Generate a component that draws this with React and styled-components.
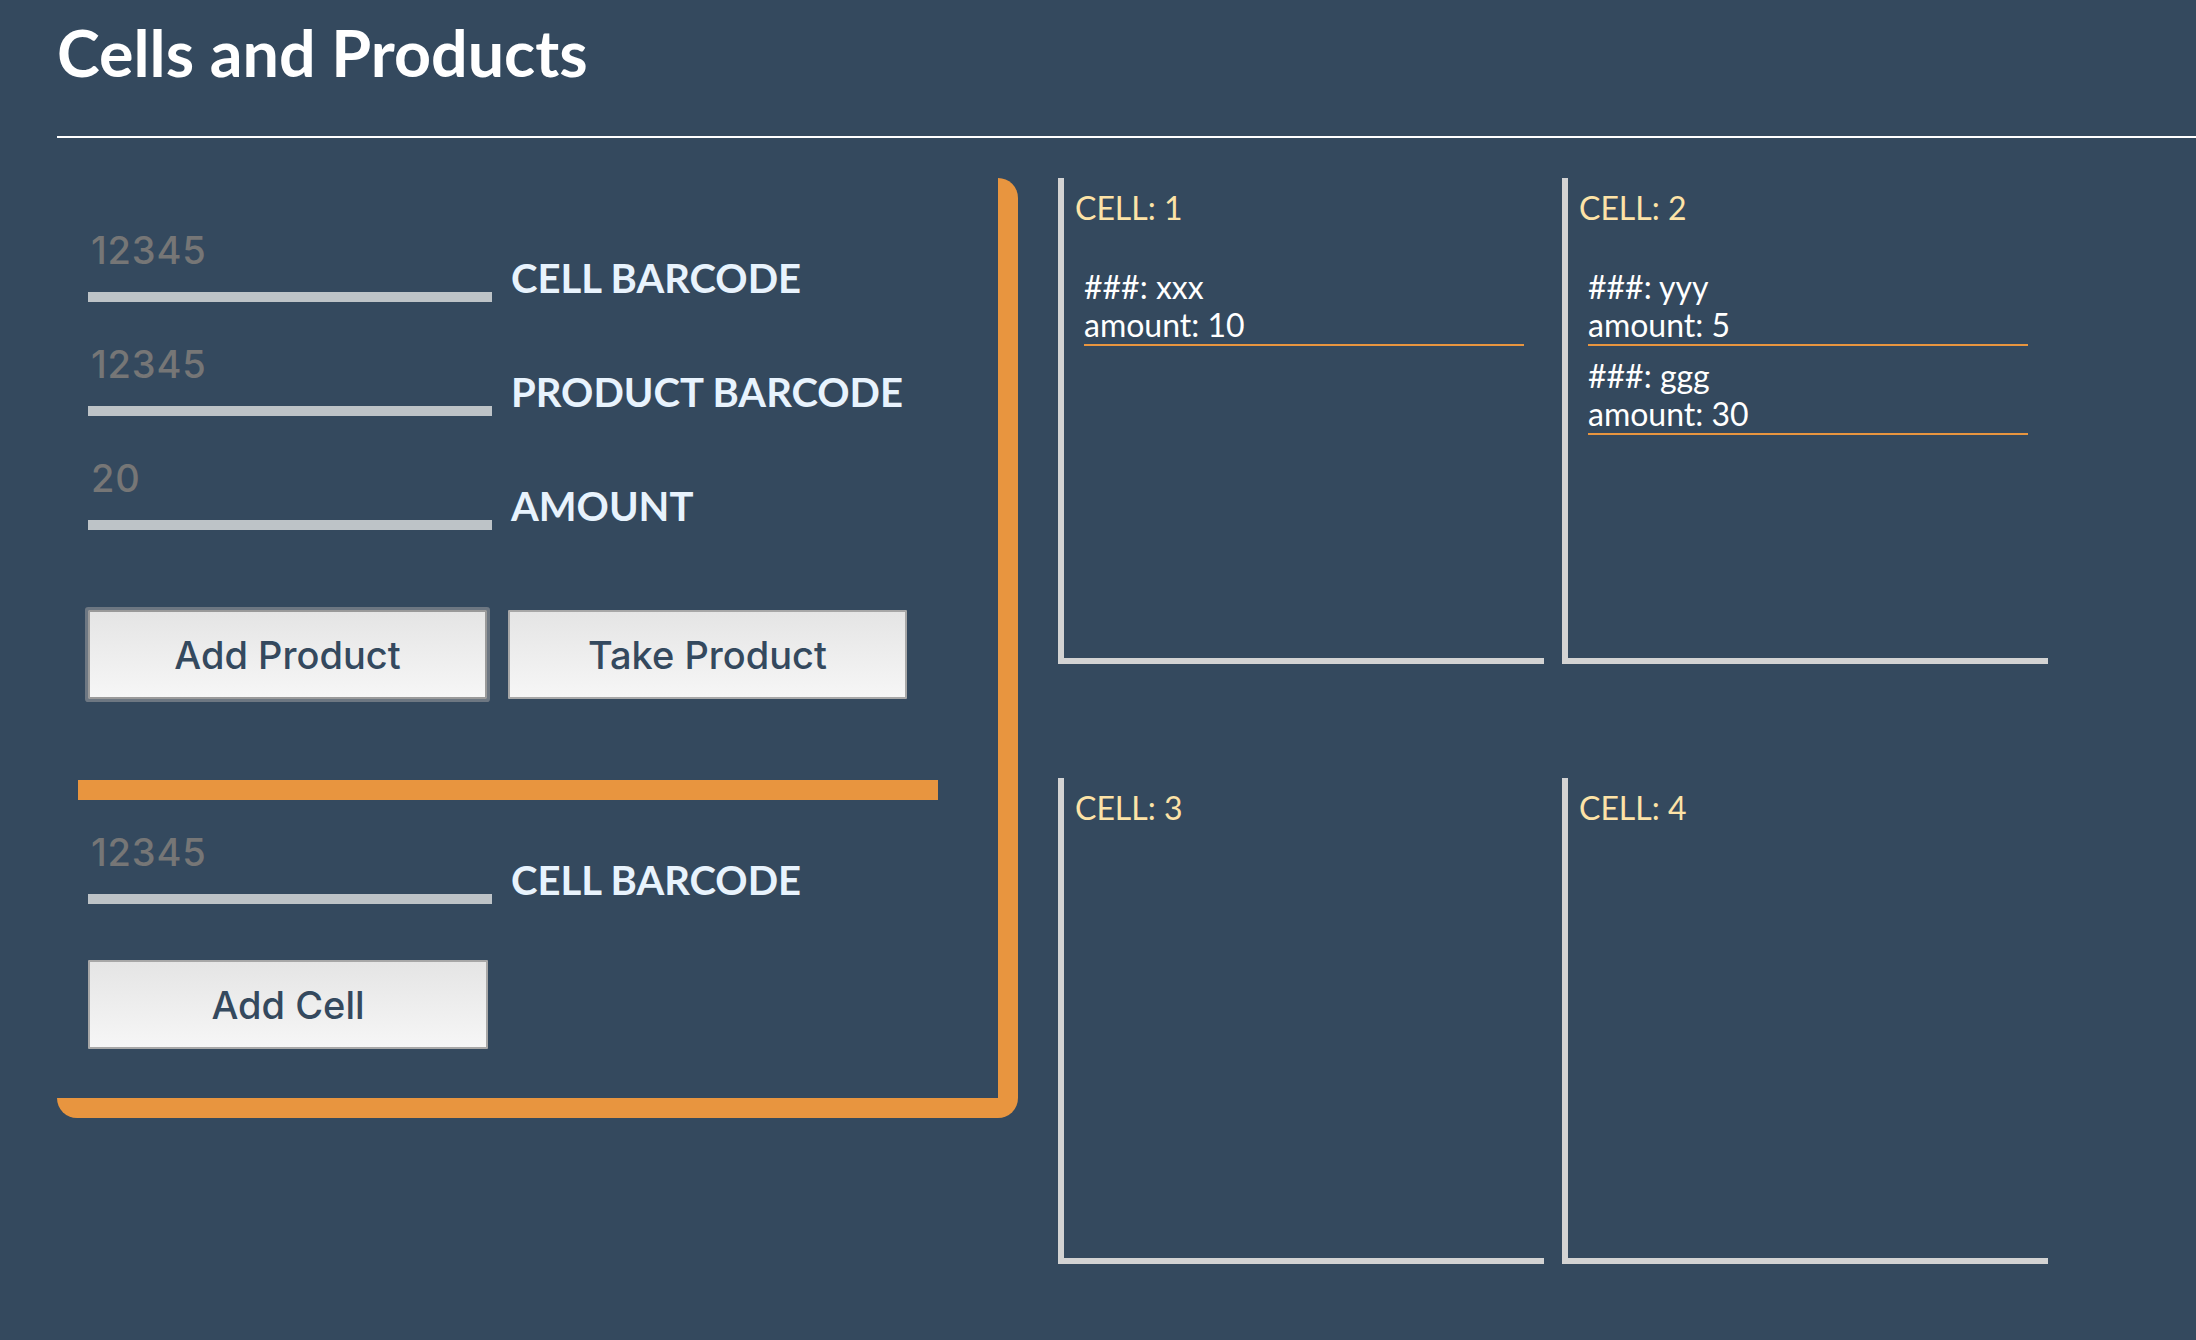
import React from "react";
import styled, { createGlobalStyle } from "styled-components";

const ORANGE = "#e8953f";
const BG = "#34495e";

const GlobalStyle = createGlobalStyle`
  html, body { margin: 0; padding: 0; background: ${BG}; }
  body { font-family: Lato, "Open Sans", sans-serif; }
  *, *::before, *::after { box-sizing: border-box; }
`;

const Page = styled.div`
  min-height: 1340px;
  background: ${BG};
  padding-left: 57px;
  overflow: hidden;
`;

const Header = styled.header`
  padding-top: 14px;
`;

const Title = styled.h1`
  margin: 0;
  font: 700 64.6px/77px Lato, sans-serif;
  color: #ffffff;
`;

const Rule = styled.hr`
  margin: 45px 0 40px;
  border: 0;
  border-top: 2px solid #ffffff;
  height: 0;
`;

const Main = styled.main`
  display: flex;
  align-items: flex-start;
  gap: 40px;
`;

const Panel = styled.section`
  flex: none;
  width: 961px;
  padding: 49px 0 49px 31px;
  border-right: 20px solid ${ORANGE};
  border-bottom: 20px solid ${ORANGE};
  border-radius: 20px;
  display: flex;
  flex-direction: column;
  align-items: flex-start;
`;

const Fields = styled.div`
  display: flex;
  flex-direction: column;
  gap: 39px;
`;

const FieldRow = styled.label`
  display: flex;
  align-items: flex-end;
`;

const TextInput = styled.input`
  width: 404px;
  margin: 0;
  padding: 0 3px 19px;
  background: transparent;
  border: 0;
  border-bottom: 10px solid #bdc3c7;
  border-radius: 0;
  outline: none;
  color: #ffffff;
  font: 500 38px/46px Inter, "Liberation Sans", sans-serif;
  letter-spacing: 0.8px;
  &::placeholder {
    color: #767676;
  }
`;

const FieldLabel = styled.span`
  margin-left: 19px;
  font: 700 40px/normal Lato, sans-serif;
  color: #e8f3fd;
  white-space: nowrap;
`;

const ButtonRow = styled.div`
  display: flex;
  gap: 21px;
  margin-top: ${(p) => p.$top}px;
`;

const Button = styled.button`
  width: ${(p) => p.$width}px;
  height: 89px;
  margin: 0;
  padding: 0;
  border: 2px solid ${(p) => (p.$focused ? "#9a9a9a" : "#a7a7a7")};
  border-radius: 1px;
  background: linear-gradient(#e5e5e5, #f6f6f6);
  color: #34495e;
  font: 500 38px/1 Inter, "Liberation Sans", sans-serif;
  cursor: pointer;
  box-shadow: ${(p) => (p.$focused ? "0 0 0 3px #6d7782" : "none")};
`;

const Divider = styled.div`
  width: 860px;
  height: 20px;
  margin: 81px 0 29px -10px;
  background: ${ORANGE};
`;

const CellGrid = styled.div`
  display: grid;
  grid-template-columns: repeat(2, 486px);
  grid-auto-rows: 486px;
  column-gap: 18px;
  row-gap: 114px;
`;

const Cell = styled.div`
  border-left: 6px solid #d3d3d3;
  border-bottom: 6px solid #d3d3d3;
  padding-top: 10px;
`;

const CellTitle = styled.h3`
  margin: 0 0 41px 11px;
  font: 400 32px/normal Lato, sans-serif;
  color: #fde3a7;
`;

const ProductList = styled.ul`
  list-style: none;
  margin: 0 20px;
  padding: 0;
`;

const Product = styled.li`
  margin-bottom: 11px;
  border-bottom: 2px solid ${ORANGE};
  font: 400 32px/38px Lato, sans-serif;
  color: #ffffff;
`;

const cells = [
  { id: 1, products: [{ code: "xxx", amount: 10 }] },
  {
    id: 2,
    products: [
      { code: "yyy", amount: 5 },
      { code: "ggg", amount: 30 },
    ],
  },
  { id: 3, products: [] },
  { id: 4, products: [] },
];

function Field({ placeholder, label }) {
  return (
    <FieldRow>
      <TextInput placeholder={placeholder} />
      <FieldLabel>{label}</FieldLabel>
    </FieldRow>
  );
}

export default function App() {
  return (
    <>
      <GlobalStyle />
      <Page>
        <Header>
          <Title>Cells and Products</Title>
        </Header>
        <Rule />
        <Main>
          <Panel>
            <Fields>
              <Field placeholder="12345" label="CELL BARCODE" />
              <Field placeholder="12345" label="PRODUCT BARCODE" />
              <Field placeholder="20" label="AMOUNT" />
            </Fields>
            <ButtonRow $top={80}>
              <Button $width={399} $focused>
                Add Product
              </Button>
              <Button $width={399}>Take Product</Button>
            </ButtonRow>
            <Divider />
            <Fields>
              <Field placeholder="12345" label="CELL BARCODE" />
            </Fields>
            <ButtonRow $top={56}>
              <Button $width={400}>Add Cell</Button>
            </ButtonRow>
          </Panel>
          <CellGrid>
            {cells.map((cell) => (
              <Cell key={cell.id}>
                <CellTitle>CELL: {cell.id}</CellTitle>
                <ProductList>
                  {cell.products.map((p) => (
                    <Product key={p.code}>
                      <div>###: {p.code}</div>
                      <div>amount: {p.amount}</div>
                    </Product>
                  ))}
                </ProductList>
              </Cell>
            ))}
          </CellGrid>
        </Main>
      </Page>
    </>
  );
}
